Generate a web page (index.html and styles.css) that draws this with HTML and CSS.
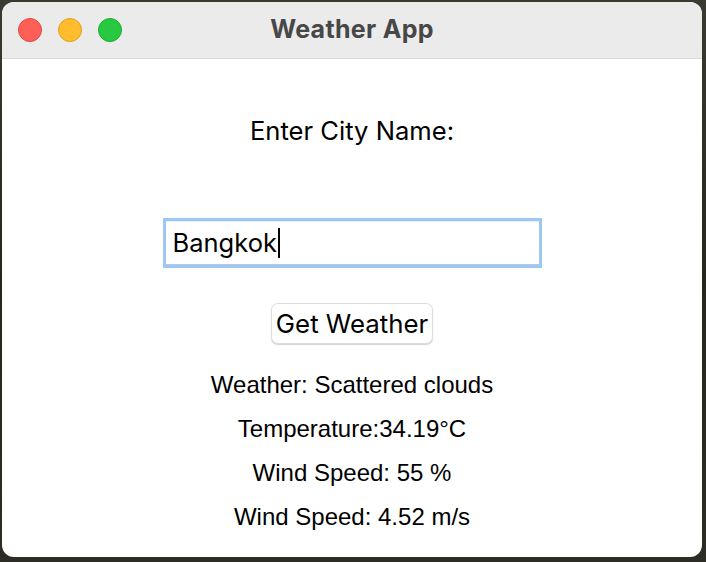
FILE: index.html
```html
<!DOCTYPE html>
<html lang="en">
<head>
<meta charset="utf-8">
<title>Weather App</title>
<link rel="stylesheet" href="styles.css">
</head>
<body>
  <div class="window">
    <div class="titlebar">
      <div class="lights">
        <span class="light red"></span>
        <span class="light yellow"></span>
        <span class="light green"></span>
      </div>
      <div class="title">Weather App</div>
    </div>
    <div class="content">
      <div class="label">Enter City Name:</div>
      <div class="field"><span class="field-text">Bangkok</span><span class="caret"></span></div>
      <div class="button">Get Weather</div>
      <div class="results">
        <div class="line">Weather: Scattered clouds</div>
        <div class="line">Temperature:34.19°C</div>
        <div class="line">Wind Speed: 55 %</div>
        <div class="line">Wind Speed: 4.52 m/s</div>
      </div>
    </div>
  </div>
</body>
</html>
```

FILE: styles.css
```css
html, body {
  margin: 0;
  padding: 0;
}
body {
  width: 706px;
  height: 562px;
  background: linear-gradient(180deg, #3a3a30 0%, #26261e 50%, #2e2d25 100%);
  overflow: hidden;
}
.window {
  margin: 2px 0 0 2px;
  width: 700px;
  height: 555px;
  background: #ffffff;
  border-radius: 12px;
  overflow: hidden;
  display: flex;
  flex-direction: column;
}
.titlebar {
  height: 56px;
  flex: none;
  background: #ebebeb;
  border-bottom: 1px solid #d6d6d6;
  display: flex;
  align-items: center;
  justify-content: center;
  position: relative;
}
.lights {
  position: absolute;
  left: 16px;
  top: 16px;
  display: flex;
  gap: 16px;
}
.light {
  width: 24px;
  height: 24px;
  border-radius: 50%;
  box-sizing: border-box;
}
.red { background: #ff5f57; border: 1px solid #e2463f; }
.yellow { background: #febc2e; border: 1px solid #e1a116; }
.green { background: #28c840; border: 1px solid #14ae2b; }
.title {
  font-family: Inter, "Liberation Sans", sans-serif;
  font-weight: 700;
  font-size: 25px;
  letter-spacing: 0.3px;
  color: #474747;
  margin-top: -2px;
}
.content {
  flex: 1;
  display: flex;
  flex-direction: column;
  align-items: center;
  color: #000;
}
.label {
  margin-top: 57px;
  font-family: Inter, "Liberation Sans", sans-serif;
  font-size: 25.6px;
  line-height: 30px;
}
.field {
  margin-top: 72px;
  width: 373px;
  height: 44px;
  box-sizing: content-box;
  border: 3px solid #9dc8f5;
  box-shadow: inset 0 -1px 0 #b8c9dc, inset 0 1px 0 #e6eef8;
  display: flex;
  align-items: center;
}
.field-text {
  margin-left: 7px;
  font-family: Inter, "Liberation Sans", sans-serif;
  font-size: 25.5px;
  line-height: 30px;
}
.caret {
  width: 2px;
  height: 30px;
  background: #000;
  margin-left: 1px;
}
.button {
  margin-top: 35px;
  width: 162px;
  height: 41px;
  box-sizing: border-box;
  border-radius: 7px;
  background: #fff;
  border: 1px solid #dcdcdc;
  box-shadow: 0 1px 1px rgba(0,0,0,0.18);
  display: flex;
  align-items: center;
  justify-content: center;
  font-family: Inter, "Liberation Sans", sans-serif;
  font-size: 25.8px;
}
.results {
  margin-top: 19px;
  display: flex;
  flex-direction: column;
  align-items: center;
}
.line {
  font-family: "Liberation Sans", Arial, sans-serif;
  font-size: 24px;
  line-height: 44px;
}
```
